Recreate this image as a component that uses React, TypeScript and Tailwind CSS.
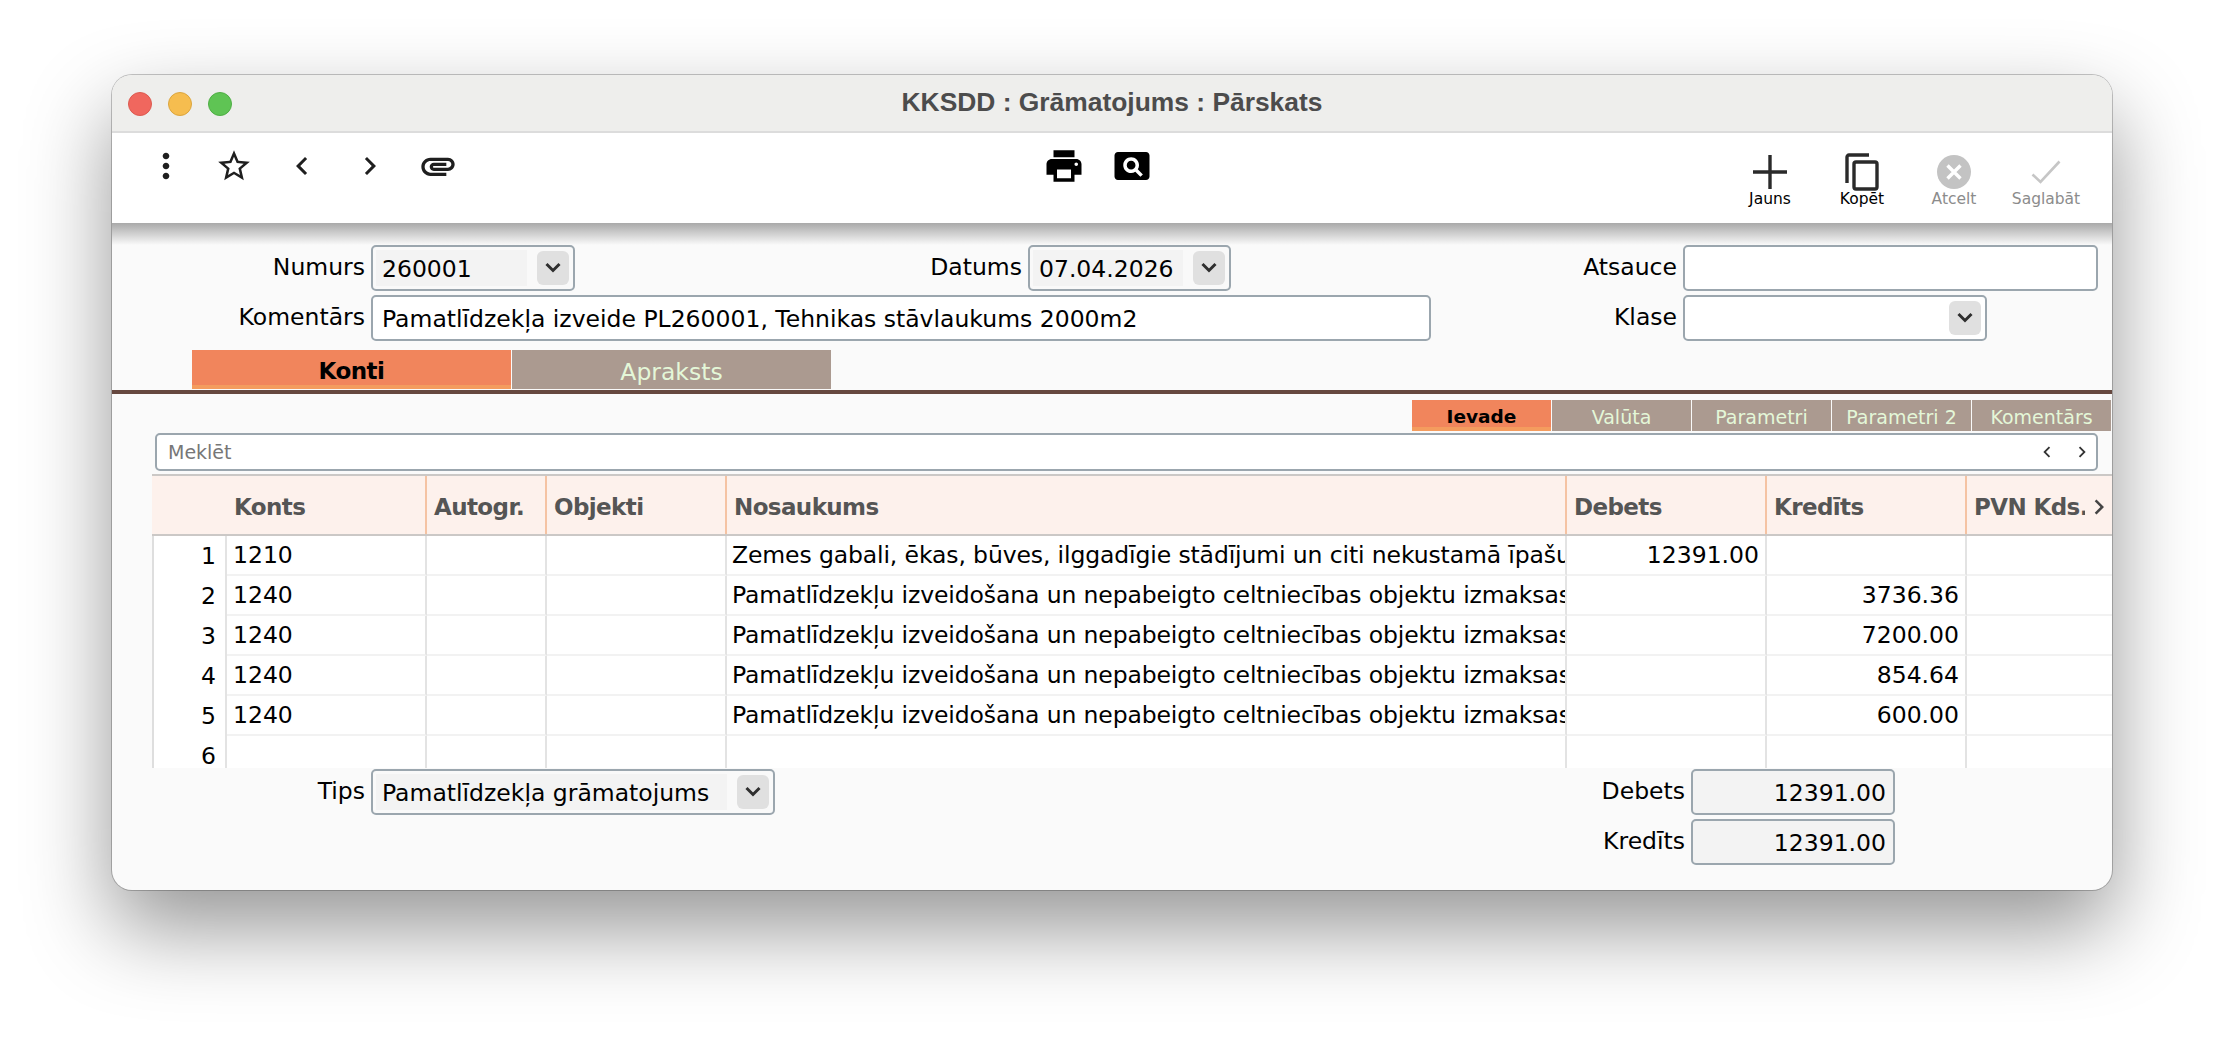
import type { ReactNode } from "react";

const Chevron = () => (
  <svg viewBox="0 0 16 11" className="h-[11px] w-[16px]" fill="none" stroke="#2f2f2f" strokeWidth="3">
    <path d="M1.5 2 8 8.5 14.5 2" />
  </svg>
);

const Combo = ({ value, width, white }: { value?: string; width: string; white?: boolean }) => (
  <div className={`flex h-[46px] items-center rounded-[5px] border-2 border-[#9ba6ae] pl-[3px] pr-[4px] ${width} ${white ? "bg-white" : "bg-[#f9f9f9]"}`}>
    <div className={`flex h-[36px] min-w-0 flex-1 items-center pl-[6px] pt-[3px] text-[23.5px] text-black ${white ? "" : "bg-[#f3f3f3] mr-[10px]"}`}>
      {value}
    </div>
    <div className="flex h-[34px] w-[32px] items-center justify-center rounded-[6px] bg-[#e0e0e0] pb-[2px]">
      <Chevron />
    </div>
  </div>
);

const TextInput = ({ value, width }: { value?: string; width: string }) => (
  <div className={`flex h-[46px] items-center rounded-[5px] border-2 border-[#9ba6ae] bg-white pl-[9px] pt-[3px] text-[23.5px] text-black ${width}`}>
    {value}
  </div>
);

const Label = ({ width, children }: { width: string; children: ReactNode }) => (
  <div className={`pr-[6px] text-right text-[23.5px] text-black ${width}`}>{children}</div>
);

const ToolButton = ({ icon, label, muted }: { icon: ReactNode; label: string; muted?: boolean }) => (
  <div className="flex w-[92px] flex-col items-center">
    <div className="flex h-[40px] items-center justify-center">{icon}</div>
    <div className={`-mt-[3px] text-[15.5px] leading-[20px] ${muted ? "text-[#8c8c8c]" : "text-black"}`}>{label}</div>
  </div>
);

const MatIcon = ({ d, className }: { d: string; className: string }) => (
  <svg viewBox="0 0 24 24" className={className} fill="#1f1f1f">
    <path d={d} />
  </svg>
);

const leftIcons = [
  { d: "M12 8c1.1 0 2-.9 2-2s-.9-2-2-2-2 .9-2 2 .9 2 2 2zm0 2c-1.1 0-2 .9-2 2s.9 2 2 2 2-.9 2-2-.9-2-2-2zm0 6c-1.1 0-2 .9-2 2s.9 2 2 2 2-.9 2-2-.9-2-2-2z", size: "h-[40px] w-[40px]" },
  { d: "M22 9.24l-7.19-.62L12 2 9.19 8.63 2 9.24l5.46 4.73L5.82 21 12 17.27 18.18 21l-1.63-7.03L22 9.24zM12 15.4l-3.76 2.27 1-4.28-3.32-2.88 4.38-.38L12 6.1l1.71 4.04 4.38.38-3.32 2.88 1 4.28L12 15.4z", size: "h-[38px] w-[38px]" },
  { d: "M15.41 7.41L14 6l-6 6 6 6 1.41-1.41L10.83 12z", size: "h-[36px] w-[36px]" },
  { d: "M8.59 16.59L10 18l6-6-6-6-1.41 1.41L13.17 12z", size: "h-[36px] w-[36px]" },
  { d: "M2 12.5C2 9.46 4.46 7 7.5 7H18c2.21 0 4 1.79 4 4s-1.79 4-4 4H9.5C8.12 15 7 13.88 7 12.5S8.12 10 9.5 10H17v2H9.41c-.55 0-.55 1 0 1H18c1.1 0 2-.9 2-2s-.9-2-2-2H7.5C5.57 9 4 10.57 4 12.5S5.57 16 7.5 16H17v2H7.5C4.46 18 2 15.54 2 12.5z", size: "h-[40px] w-[40px]" },
];

const subTabs = ["Ievade", "Valūta", "Parametri", "Parametri 2", "Komentārs"];

const colWidths = "grid grid-cols-[75px_200px_120px_180px_840px_200px_200px_145px]";

const LONG = "Pamatlīdzekļu izveidošana un nepabeigto celtniecības objektu izmaksas";

const rows = [
  { n: 1, konts: "1210", name: "Zemes gabali, ēkas, būves, ilggadīgie stādījumi un citi nekustamā īpašuma objekti", deb: "12391.00", kred: "" },
  { n: 2, konts: "1240", name: LONG, deb: "", kred: "3736.36" },
  { n: 3, konts: "1240", name: LONG, deb: "", kred: "7200.00" },
  { n: 4, konts: "1240", name: LONG, deb: "", kred: "854.64" },
  { n: 5, konts: "1240", name: LONG, deb: "", kred: "600.00" },
  { n: 6, konts: "", name: "", deb: "", kred: "" },
];

const HeadCell = ({ children, span }: { children?: ReactNode; span?: boolean }) => (
  <div className={`flex items-center overflow-hidden border-r-2 border-[#f5c3a3] pl-[7px] pt-[4px] whitespace-nowrap ${span ? "col-span-2 pl-[82px]" : ""}`}>
    {children}
  </div>
);

const Cell = ({ children, right }: { children?: ReactNode; right?: boolean }) => (
  <div className={`flex items-center overflow-hidden border-r-2 border-b-2 border-r-[#e3e3e3] border-b-[#f2f2f2] pt-[2px] whitespace-nowrap ${right ? "justify-end pr-[6px]" : "pl-[6px]"}`}>
    {children}
  </div>
);

export default function App() {
  return (
    <div className="h-[1038px] w-[2224px] overflow-hidden bg-white pl-[112px] pt-[75px] font-['DejaVu_Sans',sans-serif]">
      <div className="flex h-[815px] w-[2000px] flex-col overflow-hidden rounded-[20px] bg-[#fafafa] shadow-[0_0_0_1px_rgba(0,0,0,0.22),0_38px_85px_rgba(0,0,0,0.42)]">
        {/* title bar */}
        <div className="relative flex h-[58px] shrink-0 items-center justify-center border-b-2 border-[#dcdcdc] bg-[#eeeeec]">
          <div className="absolute left-[16px] top-[17px] flex gap-[16px]">
            <div className="h-[24px] w-[24px] rounded-full border border-[#dc5a50] bg-[#f0675e]" />
            <div className="h-[24px] w-[24px] rounded-full border border-[#dba53e] bg-[#f6bd4f]" />
            <div className="h-[24px] w-[24px] rounded-full border border-[#4fae45] bg-[#5fc454]" />
          </div>
          <div className="font-['Liberation_Sans',sans-serif] text-[26.4px] font-bold text-[#4c4c4c]">KKSDD : Grāmatojums : Pārskats</div>
        </div>

        {/* toolbar */}
        <div className="flex h-[90px] shrink-0 bg-white">
          <div className="flex w-[918px] shrink-0 pl-[20px] pt-[13px]">
            {leftIcons.map((ic) => (
              <div key={ic.d} className="flex h-[40px] w-[68px] items-center justify-center">
                <MatIcon d={ic.d} className={ic.size} />
              </div>
            ))}
          </div>
          <div className="flex w-[136px] shrink-0 pt-[13px]">
            <div className="flex h-[40px] w-[68px] items-center justify-center">
              <svg viewBox="0 0 24 24" className="h-[42px] w-[42px]" fill="#000">
                <path d="M19 8H5c-1.66 0-3 1.34-3 3v6h4v4h12v-4h4v-6c0-1.66-1.34-3-3-3zm-3 11H8v-5h8v5zm3-7c-.55 0-1-.45-1-1s.45-1 1-1 1 .45 1 1-.45 1-1 1zm-1-9H6v4h12V3z" />
              </svg>
            </div>
            <div className="flex h-[40px] w-[68px] items-center justify-center">
              <svg viewBox="0 0 24 24" className="h-[42px] w-[42px]" fill="#000">
                <path d="M11.5 9C10.12 9 9 10.12 9 11.5s1.12 2.5 2.5 2.5 2.5-1.12 2.5-2.5S12.88 9 11.5 9zM20 4H4c-1.1 0-2 .9-2 2v12c0 1.1.9 2 2 2h16c1.1 0 2-.9 2-2V6c0-1.1-.9-2-2-2zm-3.21 14.21l-2.91-2.91c-.69.44-1.51.7-2.38.7C9.01 16 7 13.99 7 11.5S9.01 7 11.5 7 16 9.01 16 11.5c0 .88-.26 1.69-.7 2.39l2.91 2.9-1.42 1.42z" />
              </svg>
            </div>
          </div>
          <div className="flex flex-1 justify-end pr-[20px] pt-[19px]">
            <ToolButton
              label="Jauns"
              icon={
                <svg viewBox="0 0 36 36" className="h-[36px] w-[36px]" stroke="#2a2a2a" strokeWidth="3.4">
                  <path d="M18 1v34M1 18h34" />
                </svg>
              }
            />
            <ToolButton
              label="Kopēt"
              icon={
                <svg viewBox="0 0 34 38" className="h-[38px] w-[34px]" fill="none" stroke="#2a2a2a" strokeWidth="3.4">
                  <path d="M24 2H4a2 2 0 0 0-2 2v26" />
                  <rect x="9" y="9" width="23" height="27" rx="2" />
                </svg>
              }
            />
            <ToolButton
              muted
              label="Atcelt"
              icon={
                <svg viewBox="0 0 34 34" className="h-[34px] w-[34px]">
                  <circle cx="17" cy="17" r="17" fill="#c3c3c3" />
                  <path d="M10.5 10.5l13 13M23.5 10.5l-13 13" stroke="#fff" strokeWidth="3.4" />
                </svg>
              }
            />
            <ToolButton
              muted
              label="Saglabāt"
              icon={
                <svg viewBox="0 0 30 24" className="h-[24px] w-[30px]" fill="none" stroke="#c6c6c6" strokeWidth="2.6">
                  <path d="M1.5 14.5 9.5 22 28.5 1.5" />
                </svg>
              }
            />
          </div>
        </div>

        {/* shadow under the toolbar */}
        <div className="h-[22px] shrink-0 bg-gradient-to-b from-[#a9a9a9] to-[#fafafa]" />

        {/* form */}
        <div className="flex shrink-0 items-center">
          <Label width="w-[259px]">Numurs</Label>
          <Combo value="260001" width="w-[204px]" />
          <Label width="w-[453px]">Datums</Label>
          <Combo value="07.04.2026" width="w-[203px]" />
          <Label width="w-[452px]">Atsauce</Label>
          <TextInput width="w-[415px]" />
        </div>
        <div className="mt-[4px] flex shrink-0 items-center">
          <Label width="w-[259px]">Komentārs</Label>
          <TextInput width="w-[1060px]" value="Pamatlīdzekļa izveide PL260001, Tehnikas stāvlaukums 2000m2" />
          <Label width="w-[252px]">Klase</Label>
          <Combo white width="w-[304px]" />
        </div>

        {/* main tabs */}
        <div className="mt-[9px] flex h-[39px] shrink-0 gap-[1px] pl-[80px]">
          <div className="flex w-[319px] items-center justify-center border-b-4 border-[#f49c5e] bg-[#f1855c] pt-[8px] text-[23px] font-bold tracking-[-0.5px] text-black">Konti</div>
          <div className="flex w-[319px] items-center justify-center bg-[#ab9a90] pt-[6px] text-[23.5px] text-[#e4f7d8]">Apraksts</div>
        </div>
        <div className="mt-[1px] h-[4px] shrink-0 bg-[#66483f]" />

        {/* sub tabs */}
        <div className="mt-[6px] flex h-[31px] shrink-0 justify-end gap-[1px] pr-[1px]">
          {subTabs.map((t, i) => (
            <div
              key={t}
              className={`flex w-[139px] items-center justify-center ${
                i === 0 ? "border-b-4 border-[#f49c5e] bg-[#f1855c] pt-[6px] text-[18.5px] font-bold text-black" : "bg-[#ab9a90] pt-[3px] text-[19px] text-[#e4f7d8]"
              }`}
            >
              {t}
            </div>
          ))}
        </div>

        {/* search */}
        <div className="ml-[43px] mt-[2px] flex h-[38px] w-[1943px] shrink-0 items-center rounded-[5px] border-2 border-[#9ba6ae] bg-white pl-[11px] pr-[3px] text-[19px] text-[#777]">
          <span className="flex-1">Meklēt</span>
          <svg viewBox="0 0 24 24" className="mr-[13px] h-[22px] w-[22px]" fill="#333">
            <path d="M15.41 7.41L14 6l-6 6 6 6 1.41-1.41L10.83 12z" />
          </svg>
          <svg viewBox="0 0 24 24" className="h-[22px] w-[22px]" fill="#333">
            <path d="M8.59 16.59L10 18l6-6-6-6-1.41 1.41L13.17 12z" />
          </svg>
        </div>

        {/* table */}
        <div className="ml-[40px] mt-[3px] h-[294px] shrink-0 overflow-hidden bg-white">
          <div className={`${colWidths} h-[62px] border-y-2 border-y-[#cbc8c6] bg-[#fdf1ec] text-[23px] font-bold tracking-[-0.6px] text-[#555]`}>
            <HeadCell span>Konts</HeadCell>
            <HeadCell>Autogr.</HeadCell>
            <HeadCell>Objekti</HeadCell>
            <HeadCell>Nosaukums</HeadCell>
            <HeadCell>Debets</HeadCell>
            <HeadCell>Kredīts</HeadCell>
            <div className="relative flex items-center pl-[7px] pt-[4px] whitespace-nowrap">
              <span className="w-[111px] overflow-hidden">PVN Kds.</span>
              <svg viewBox="0 0 24 24" className="absolute right-[-2px] h-[30px] w-[30px]" fill="#444">
                <path d="M8.59 16.59L10 18l6-6-6-6-1.41 1.41L13.17 12z" />
              </svg>
            </div>
          </div>
          <div className="border-l-2 border-[#dedede] text-[23.5px] text-black">
            {rows.map((r) => (
              <div key={r.n} className={`${colWidths} -ml-[2px] h-[40px]`}>
                <div className="flex items-center justify-end border-r-2 border-[#e3e3e3] pr-[9px] pt-[2px]">{r.n}</div>
                <Cell>{r.konts}</Cell>
                <Cell />
                <Cell />
                <Cell>
                  <span className="-ml-[1px] tracking-[-0.12px]">{r.name}</span>
                </Cell>
                <Cell right>{r.deb}</Cell>
                <Cell right>{r.kred}</Cell>
                <div className="border-b-2 border-[#f2f2f2]" />
              </div>
            ))}
          </div>
        </div>

        {/* footer */}
        <div className="mt-[1px] flex items-start">
          <div className="flex items-center">
            <Label width="w-[259px]">Tips</Label>
            <Combo value="Pamatlīdzekļa grāmatojums" width="w-[404px]" />
          </div>
          <div className="flex flex-col gap-[4px]">
            {["Debets", "Kredīts"].map((l) => (
              <div key={l} className="flex items-center">
                <Label width="w-[916px]">{l}</Label>
                <div className="flex h-[46px] w-[204px] items-center justify-end rounded-[5px] border-2 border-[#9ba6ae] bg-[#f3f3f3] pr-[7px] pt-[3px] text-[23.5px] text-black">
                  12391.00
                </div>
              </div>
            ))}
          </div>
        </div>
      </div>
    </div>
  );
}
